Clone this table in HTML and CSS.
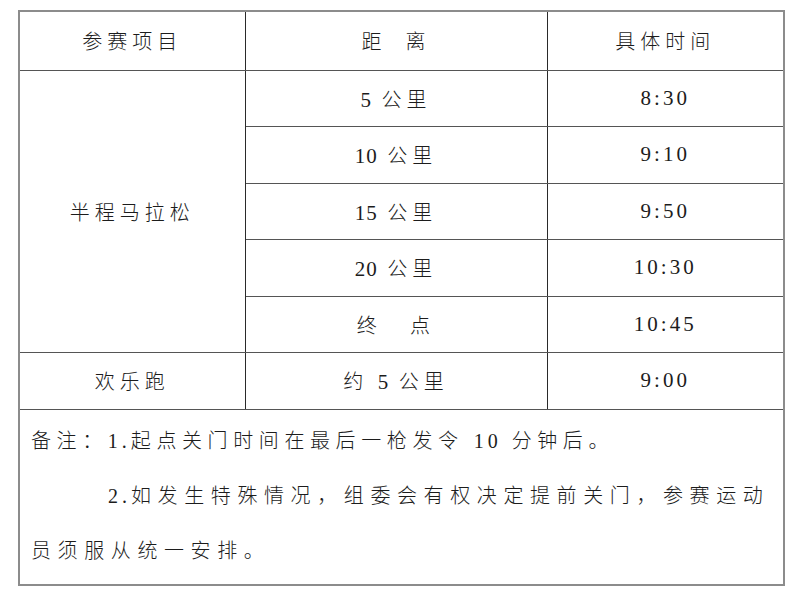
FILE: index.html
```html
<!DOCTYPE html>
<html lang="zh-CN">
<head>
<meta charset="utf-8">
<title>赛事时间表</title>
<link rel="stylesheet" href="styles.css">
</head>
<body>
<table class="schedule">
  <colgroup>
    <col class="c1">
    <col class="c2">
    <col class="c3">
  </colgroup>
  <tr class="head">
    <td>参赛项目</td>
    <td>距&nbsp;&nbsp;离</td>
    <td>具体时间</td>
  </tr>
  <tr class="row">
    <td rowspan="5">半程马拉松</td>
    <td><span class="num">5</span> 公里</td>
    <td class="time">8:30</td>
  </tr>
  <tr class="row">
    <td><span class="num">10</span> 公里</td>
    <td class="time">9:10</td>
  </tr>
  <tr class="row">
    <td><span class="num">15</span> 公里</td>
    <td class="time">9:50</td>
  </tr>
  <tr class="row">
    <td><span class="num">20</span> 公里</td>
    <td class="time">10:30</td>
  </tr>
  <tr class="row">
    <td>终&nbsp;&nbsp;&nbsp;点</td>
    <td class="time">10:45</td>
  </tr>
  <tr class="row">
    <td>欢乐跑</td>
    <td>约 <span class="num">5</span> 公里</td>
    <td class="time">9:00</td>
  </tr>
  <tr class="notes">
    <td colspan="3">
      <div class="note">备注：<span class="num">1.</span>起点关门时间在最后一枪发令 <span class="num">10</span> 分钟后。</div>
      <div class="note indent"><span class="num">2.</span>如发生特殊情况，组委会有权决定提前关门，参赛运动<br>员须服从统一安排。</div>
    </td>
  </tr>
</table>
</body>
</html>
```
FILE: styles.css
```css
html, body {
  margin: 0;
  padding: 0;
  background: #ffffff;
}

body {
  font-family: "Noto Sans CJK SC", sans-serif;
  color: #1c1c1c;
  font-size: 20px;
}

.num,
.schedule td.time {
  font-family: "Liberation Serif", "Times New Roman", serif;
  font-weight: 400;
  font-size: 21px;
}

.schedule {
  margin: 10px 0 0 18px;
  width: 765px;
  border-collapse: collapse;
  table-layout: fixed;
  border: 2px solid #8c8c8c;
}

.c1 { width: 226px; }
.c2 { width: 302px; }
.c3 { width: 237px; }

.schedule td {
  padding: 0;
  text-align: center;
  vertical-align: middle;
  letter-spacing: 5px;
  font-weight: 300;
  border-top: 1px solid #555555;
  border-bottom: 1px solid #555555;
  border-left: 1px solid #2a2a2a;
  border-right: 1px solid #2a2a2a;
}

.schedule td.time {
  letter-spacing: 3px;
}

.num {
  letter-spacing: 1px;
}

.head {
  height: 59px;
}

.row {
  height: 56.5px;
}

.notes {
  height: 176px;
}

.notes td {
  text-align: left;
  vertical-align: top;
  padding: 3px 0 0 11px;
}

.note {
  line-height: 54px;
  white-space: nowrap;
  letter-spacing: 5.6px;
}

.note .num {
  letter-spacing: 4px;
  font-size: 20px;
}

.indent {
  text-indent: 77px;
  letter-spacing: 6.6px;
}
```
